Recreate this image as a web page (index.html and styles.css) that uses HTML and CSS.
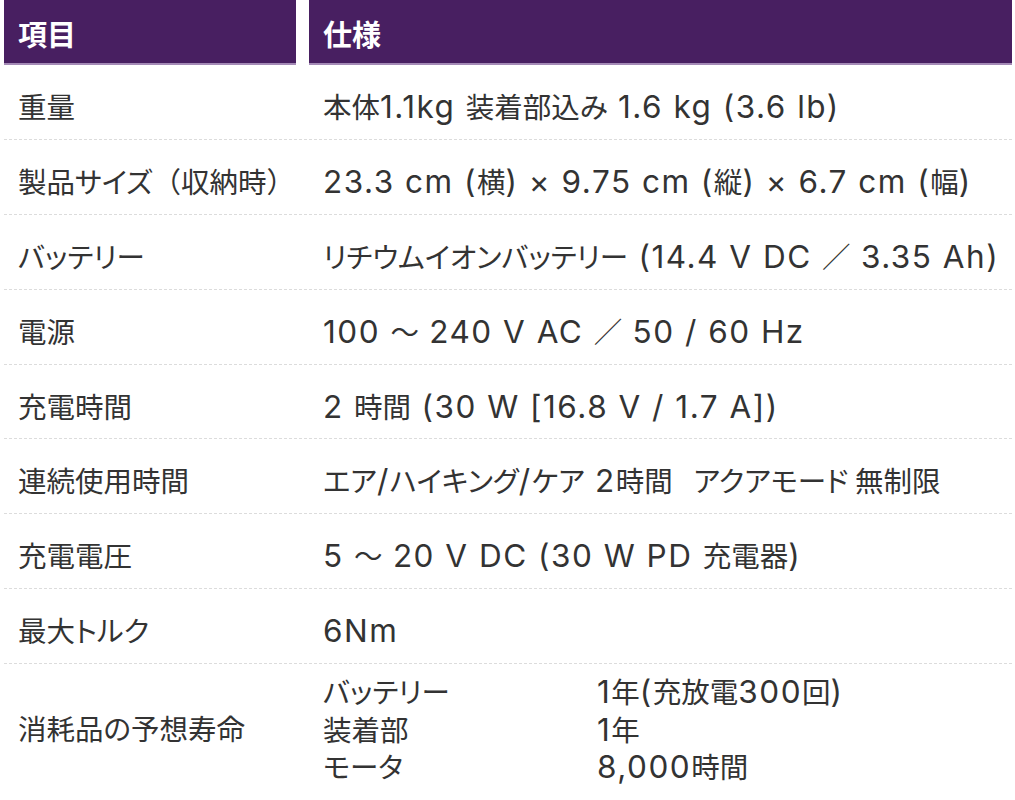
FILE: index.html
```html
<!DOCTYPE html>
<html lang="ja">
<head>
<meta charset="utf-8">
<link rel="stylesheet" href="styles.css">
</head>
<body>
<div class="spec">
  <div class="head">
    <div class="hcell">項目</div>
    <div class="hcell">仕様</div>
  </div>
  <div class="row"><div class="k">重量</div><div class="v">本体<span class="en">1.1kg </span>装着部込み<span class="en"> 1.6 kg (3.6 lb)</span></div></div>
  <div class="row"><div class="k">製品サイズ<span class="fw">（</span>収納時<span class="fw">）</span></div><div class="v"><span class="en">23.3 cm (</span>横<span class="en">) × 9.75 cm (</span>縦<span class="en">) × 6.7 cm (</span>幅<span class="en">)</span></div></div>
  <div class="row"><div class="k">バッテリー</div><div class="v">リチウムイオンバッテリー<span class="en"> (14.4 V DC </span>／<span class="en"> 3.35 Ah)</span></div></div>
  <div class="row"><div class="k">電源</div><div class="v"><span class="en">100 </span>～<span class="en"> 240 V AC </span>／<span class="en"> 50 / 60 Hz</span></div></div>
  <div class="row"><div class="k">充電時間</div><div class="v"><span class="en">2 </span>時間<span class="en"> (30 W [16.8 V / 1.7 A])</span></div></div>
  <div class="row"><div class="k">連続使用時間</div><div class="v">エア<span class="en">/</span>ハイキング<span class="en">/</span>ケア<span class="en"> 2</span>時間<span class="en">&nbsp; </span>アクアモード 無制限</div></div>
  <div class="row"><div class="k">充電電圧</div><div class="v"><span class="en">5 </span>～<span class="en"> 20 V DC (30 W PD </span>充電器<span class="en">)</span></div></div>
  <div class="row"><div class="k">最大トルク</div><div class="v"><span class="en">6Nm</span></div></div>
  <div class="row last">
    <div class="k">消耗品の予想寿命</div>
    <div class="v sub">
      <span>バッテリー</span><span><span class="en">1</span>年<span class="en">(</span>充放電<span class="en">300</span>回<span class="en">)</span></span>
      <span>装着部</span><span><span class="en">1</span>年</span>
      <span>モータ</span><span><span class="en">8,000</span>時間</span>
    </div>
  </div>
</div>
</body>
</html>
```
FILE: styles.css
```css
html, body {
  margin: 0;
  padding: 0;
  background: #ffffff;
}
body {
  font-family: "Noto Sans CJK JP", "Noto Sans", sans-serif;
  color: #333333;
}
.spec {
  width: 1008px;
  margin-left: 4px;
}
.head {
  display: grid;
  grid-template-columns: 292px 1fr;
  column-gap: 13px;
}
.hcell {
  background: #481f61;
  color: #ffffff;
  font-weight: 700;
  font-size: 29px;
  line-height: 30px;
  padding: 18px 14px 15px;
  border-bottom: 2px solid #a48ab6;
}
.row {
  display: grid;
  grid-template-columns: 292px 1fr;
  column-gap: 13px;
  border-bottom: 1px dashed #dcdcdc;
  font-size: 28.5px;
  line-height: 30px;
  padding: 26px 0 16.9px;
  font-feature-settings: "palt" 1;
}
.k, .v {
  padding-left: 14px;
  white-space: nowrap;
}
.fw {
  font-feature-settings: normal;
}
.en {
  font-family: "Inter", "Noto Sans", sans-serif;
  font-size: 31.5px;
  line-height: 30px;
  letter-spacing: 1.5px;
  font-feature-settings: normal;
}
.row.last {
  border-bottom: none;
  padding: 8px 0 0;
  align-items: center;
}
.row.last .sub {
  display: grid;
  grid-template-columns: 274px 1fr;
  line-height: 37.5px;
}
```
